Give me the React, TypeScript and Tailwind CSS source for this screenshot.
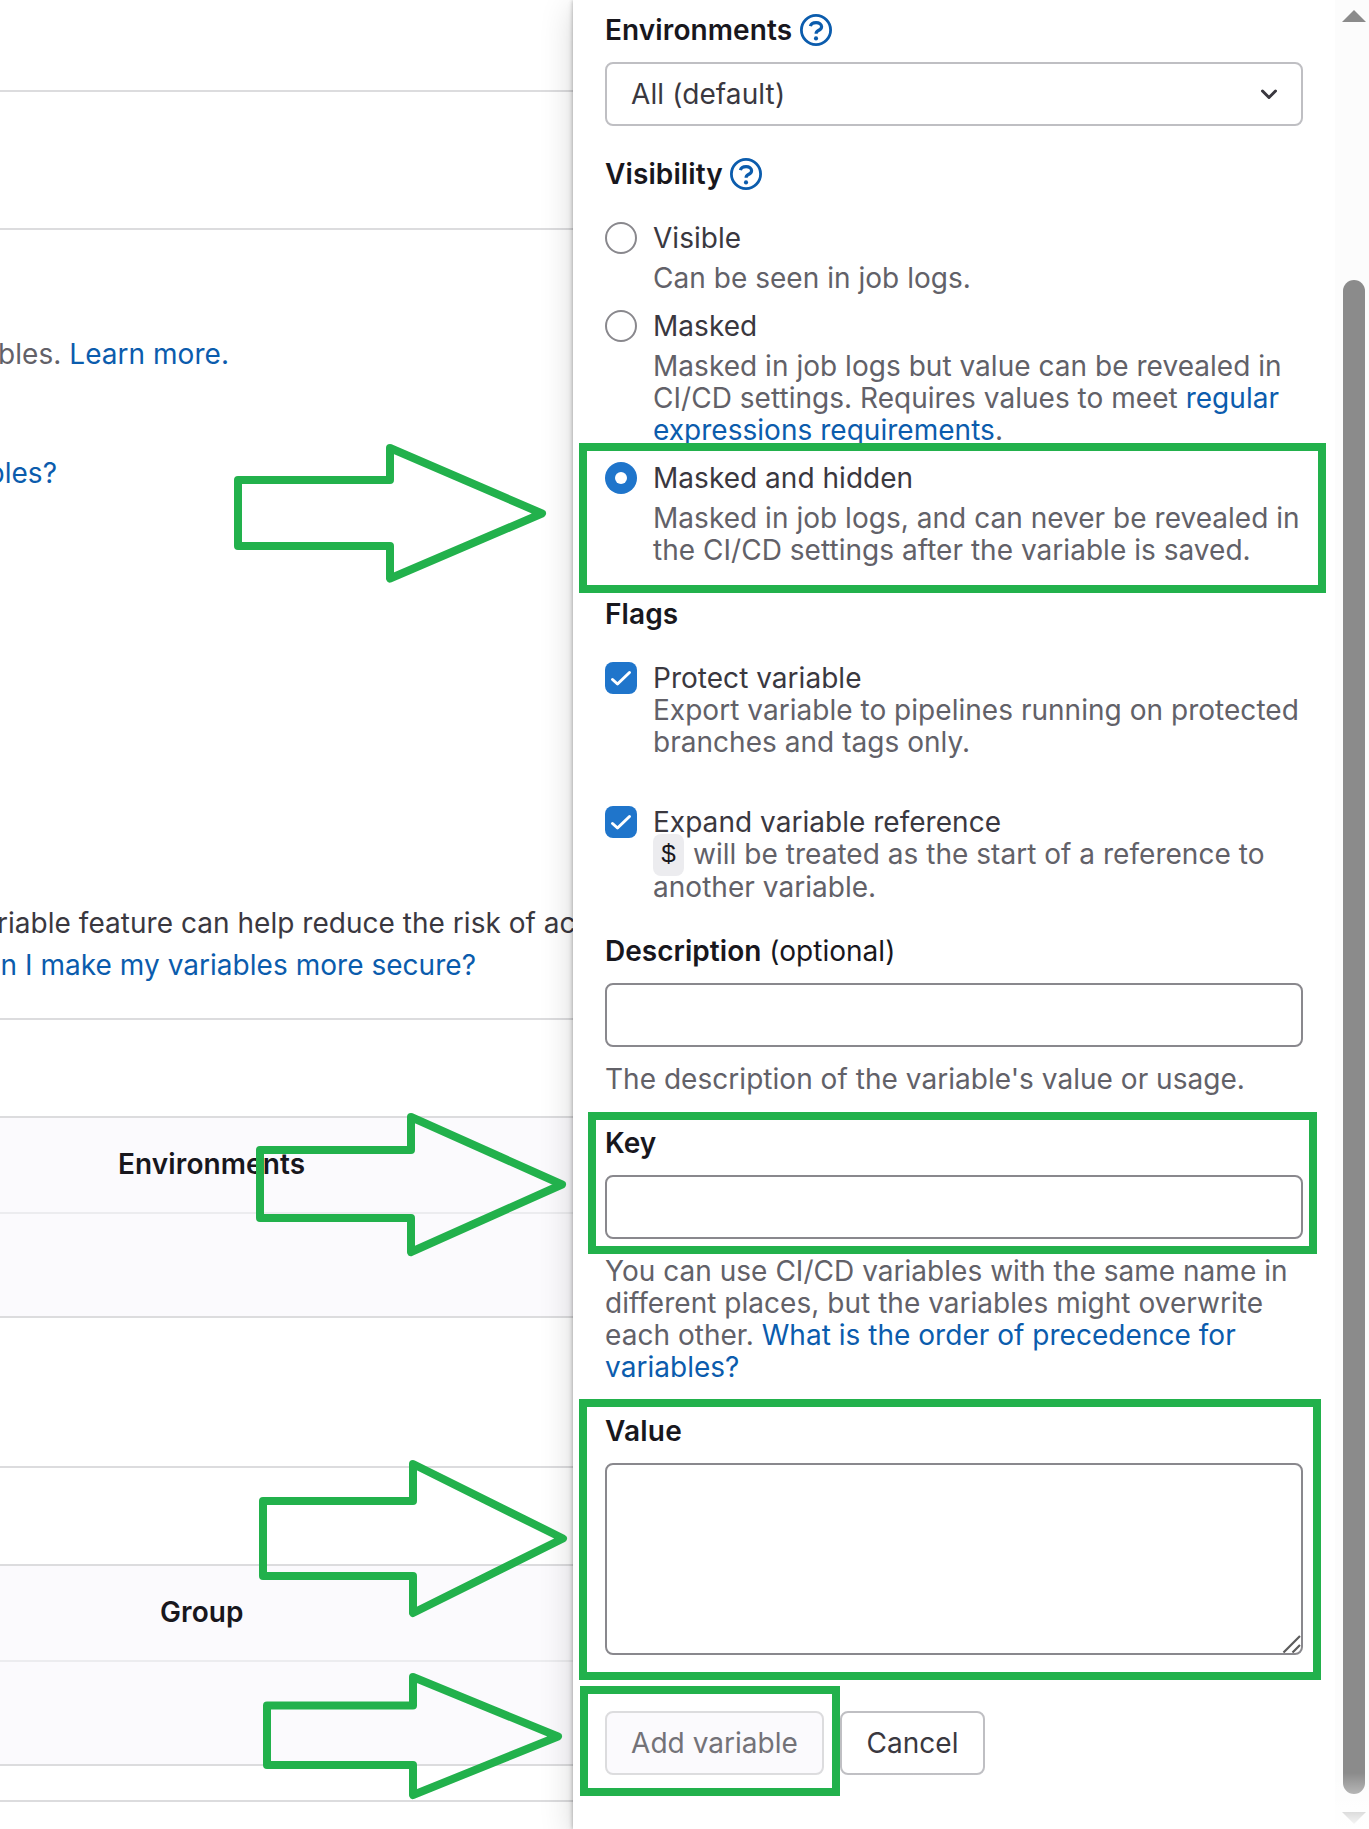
import React from "react";

function QuestionIcon() {
  return (
    <svg viewBox="0 0 16 16" className="size-8 shrink-0 text-[#0b5cad]" fill="none" stroke="currentColor" strokeWidth="1.4">
      <circle cx="8" cy="8" r="7.3" />
      <path d="M5.2 6.1C5.5 4.9 6.6 4.3 8.05 4.3c1.6 0 2.75.8 2.75 2.05 0 1.1-.8 1.5-1.6 1.9-.75.37-1.15.75-1.15 1.65" strokeWidth="1.6" />
      <circle cx="8" cy="12.2" r="1.05" fill="currentColor" stroke="none" />
    </svg>
  );
}

function Radio({ checked = false }: { checked?: boolean }) {
  return checked ? (
    <span className="flex size-8 shrink-0 items-center justify-center rounded-full bg-[#1f75cb]">
      <span className="size-3 rounded-full bg-white" />
    </span>
  ) : (
    <span className="size-8 shrink-0 rounded-full border-2 border-[#89888d] bg-white" />
  );
}

function Check() {
  return (
    <span className="size-8 shrink-0 rounded-lg bg-[#1f75cb]">
      <svg viewBox="0 0 32 32" className="size-8" fill="none" stroke="white" strokeWidth="3" strokeLinecap="round" strokeLinejoin="round">
        <path d="M7.5 17.5 12.5 22 24.5 10.5" />
      </svg>
    </span>
  );
}

function Option({ control, title, children }: { control: React.ReactNode; title: string; children: React.ReactNode }) {
  return (
    <div className="flex gap-4">
      {control}
      <div className="min-w-0 grow">
        <div className="text-[#3a383f]">{title}</div>
        {children}
      </div>
    </div>
  );
}

function Highlight({ className }: { className: string }) {
  return <div className={"pointer-events-none absolute border-8 border-[#22b14c] " + className} />;
}

const arrows = [
  "M238 480H390V448L542 513.5 390 578.5V546H238Z",
  "M260 1150H411V1117L562 1184.5 411 1252V1218H260Z",
  "M263 1501H413V1464L563 1538.5 413 1613V1576H263Z",
  "M267 1705.5H413V1677L558 1736.5 413 1795V1765H267Z",
];

function TableBlock({ title, titleClass }: { title: string; titleClass: string }) {
  return (
    <div className="h-[202px] border-y-2 border-[#dcdcde] bg-[#fbfafd]">
      <div className={"flex h-24 items-center border-b-2 border-[#ececef] pb-[2px] font-semibold tracking-[0.1px] text-[#18171d] " + titleClass}>{title}</div>
    </div>
  );
}

function Link({ children }: { children: React.ReactNode }) {
  return <span className="text-[#0b5cad]">{children}</span>;
}

export default function App() {
  return (
    <div className="relative flex h-[1829px] w-[1369px] overflow-hidden bg-white font-['Inter',sans-serif] text-[28px] leading-8 tracking-[0.03px] text-[#3a383f]">
      <main className="w-[573px] shrink-0 overflow-hidden whitespace-nowrap">
        <div className="h-[92px] border-b-2 border-[#dcdcde]" />
        <div className="h-[138px] border-b-2 border-[#dcdcde]" />
        <div className="flex h-[790px] flex-col border-b-2 border-[#dcdcde] pt-[108px]">
          <div className="flex w-[229px] justify-end gap-2 text-[#626168]">
            <span>bles.</span>
            <Link>Learn more.</Link>
          </div>
          <div className="mt-[87px] flex w-[57px] justify-end">
            <Link>bles?</Link>
          </div>
          <div className="mt-[418px] -ml-[3px]">riable feature can help reduce the risk of ac</div>
          <div className="mt-[10px] flex w-[476px] justify-end">
            <Link>n I make my variables more secure?</Link>
          </div>
        </div>
        <div className="h-24" />
        <TableBlock title="Environments" titleClass="pl-[118px]" />
        <div className="h-[148px]" />
        <div className="h-[98px] border-t-2 border-[#dcdcde]" />
        <TableBlock title="Group" titleClass="pl-[160px]" />
        <div className="h-9 border-b-2 border-[#dcdcde]" />
      </main>

      <aside className="relative flex grow bg-white shadow-[0_0_4px_rgba(5,5,6,0.3),0_4px_8px_rgba(5,5,6,0.08),0_8px_32px_rgba(5,5,6,0.16)]">
        <div className="flex w-[762px] flex-col pt-[14px] pr-8 pl-8">
          <div className="flex gap-2 font-semibold tracking-[0.1px] text-[#18171d]">
            Environments <QuestionIcon />
          </div>
          <div className="mt-4 flex h-16 w-[698px] items-center justify-between rounded-lg border-2 border-[#bfbfc3] pr-[22px] pl-6">
            <span className="tracking-[0.1px]">All (default)</span>
            <svg viewBox="0 0 20 12" className="h-3 w-5" fill="none" stroke="#3a383f" strokeWidth="3" strokeLinecap="round" strokeLinejoin="round">
              <path d="M3.5 3 10 9.5 16.5 3" />
            </svg>
          </div>
          <div className="mt-8 flex gap-[7px] font-semibold tracking-[0.1px] text-[#18171d]">
            Visibility <QuestionIcon />
          </div>
          <div className="mt-8 flex flex-col gap-4">
            <Option control={<Radio />} title="Visible">
              <p className="mt-2 text-[#626168]">Can be seen in job logs.</p>
            </Option>
            <Option control={<Radio />} title="Masked">
              <p className="mt-2 whitespace-nowrap text-[#626168]">
                Masked in job logs but value can be revealed in<br />
                CI/CD settings. Requires values to meet <Link>regular<br />expressions requirements</Link>.
              </p>
            </Option>
            <Option control={<Radio checked />} title="Masked and hidden">
              <p className="mt-2 whitespace-nowrap text-[#626168]">
                Masked in job logs, and can never be revealed in<br />
                the CI/CD settings after the variable is saved.
              </p>
            </Option>
          </div>
          <div className="mt-8 font-semibold tracking-[0.1px] text-[#18171d]">Flags</div>
          <div className="mt-8">
            <Option control={<Check />} title="Protect variable">
              <p className="whitespace-nowrap text-[#626168]">
                Export variable to pipelines running on protected<br />
                branches and tags only.
              </p>
            </Option>
          </div>
          <div className="mt-12 h-[97px]">
            <Option control={<Check />} title="Expand variable reference">
              <div className="whitespace-nowrap text-[#626168]">
                <div className="flex h-[33px] gap-[9px]">
                  <code className="-mt-1 flex h-[42px] w-[31px] shrink-0 items-center justify-center rounded-lg bg-[#ececef] font-['Liberation_Mono',monospace] text-[26px] text-[#18171d]">$</code>
                  <span>will be treated as the start of a reference to</span>
                </div>
                <div>another variable.</div>
              </div>
            </Option>
          </div>
          <div className="mt-8 text-[#18171d]"><span className="font-semibold">Description</span> (optional)</div>
          <div className="mt-4 h-16 w-[698px] rounded-lg border-2 border-[#89888d]" />
          <p className="mt-4 whitespace-nowrap text-[#626168]">The description of the variable's value or usage.</p>
          <div className="mt-8 font-semibold tracking-[0.1px] text-[#18171d]">Key</div>
          <div className="mt-4 h-16 w-[698px] rounded-lg border-2 border-[#89888d]" />
          <p className="mt-4 whitespace-nowrap text-[#626168]">
            You can use CI/CD variables with the same name in<br />
            different places, but the variables might overwrite<br />
            each other. <Link>What is the order of precedence for<br />variables?</Link>
          </p>
          <div className="mt-8 font-semibold tracking-[0.2px] text-[#18171d]">Value</div>
          <div className="mt-4 flex h-48 w-[698px] items-end justify-end rounded-lg border-2 border-[#89888d]">
            <svg viewBox="0 0 20 20" className="size-5" fill="none" stroke="#5c5c5c" strokeWidth="2.2">
              <path d="M2.5 19.5 19 3M11.5 19.5 19 12" />
            </svg>
          </div>
          <div className="mt-14 flex gap-4">
            <div className="flex h-16 w-[219px] items-center justify-center rounded-lg border-2 border-[#dcdcde] bg-[#fbfafd] text-[#737278]">Add variable</div>
            <div className="flex h-16 w-[145px] items-center justify-center rounded-lg border-2 border-[#bfbfc3]">Cancel</div>
          </div>
        </div>
        <div className="flex w-[34px] flex-col items-center bg-[#fcfcfc] pt-[10px] pl-[4px]">
          <svg viewBox="0 0 24 12" className="h-3 w-6"><path d="M12 0 24 12H0Z" fill="#8b8b8b" /></svg>
          <div className="mt-[258px] h-[1514px] w-[22px] rounded-full bg-[#8b8b8b]" />
          <svg viewBox="0 0 24 12" className="mt-[18px] h-3 w-6"><path d="M0 0H24L12 12Z" fill="#8b8b8b" /></svg>
        </div>
        <div className="absolute bottom-0 left-0 h-14 w-full bg-linear-to-b from-transparent to-white" />
      </aside>

      <Highlight className="top-[443px] left-[579px] h-[150px] w-[747px]" />
      <Highlight className="top-[1112px] left-[588px] h-[142px] w-[729px]" />
      <Highlight className="top-[1399px] left-[579px] h-[281px] w-[742px]" />
      <Highlight className="top-[1686px] left-[580px] h-[110px] w-[260px]" />
      <svg viewBox="0 0 1369 1829" className="pointer-events-none absolute inset-0 h-full w-full" fill="none" stroke="#22b14c" strokeWidth="8" strokeLinejoin="round">
        {arrows.map((d) => (
          <path key={d} d={d} />
        ))}
      </svg>
    </div>
  );
}
